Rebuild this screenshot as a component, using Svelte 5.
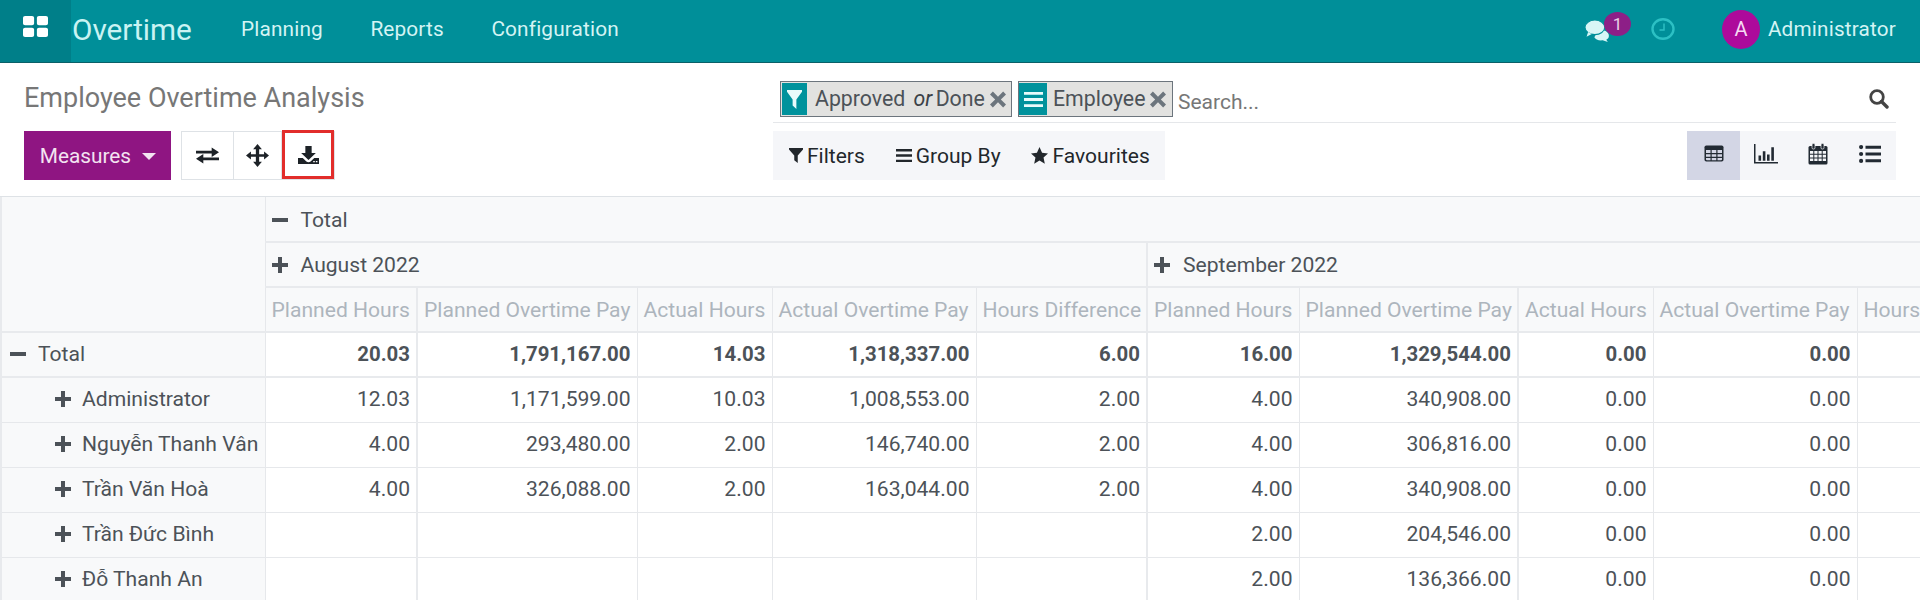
<script>
  const icons = {
    apps: 'M1.5 0h5A1.5 1.5 0 0 1 8 1.5v5A1.5 1.5 0 0 1 6.500 8h-5A1.500 1.500 0 0 1 0 6.500v-5A1.500 1.500 0 0 1 1.500 0zM11.500 0h5A1.500 1.500 0 0 1 18 1.500v5A1.500 1.500 0 0 1 16.500 8h-5A1.500 1.500 0 0 1 10 6.500v-5A1.500 1.500 0 0 1 11.500 0zM1.500 10h5A1.500 1.500 0 0 1 8 11.500v5A1.500 1.500 0 0 1 6.500 18h-5A1.500 1.500 0 0 1 0 16.500v-5A1.500 1.500 0 0 1 1.500 10zM11.500 10h5a1.500 1.500 0 0 1 1.500 1.500v5a1.500 1.500 0 0 1-1.500 1.500h-5a1.500 1.500 0 0 1-1.500-1.500v-5a1.500 1.500 0 0 1 1.500-1.500z',
    exchange: 'M0 4h15V0.500l7 5-7 5V7H0zM22 11H7V7.500l-7 5 7 5V14h15z',
    move: 'M10.500 0l4 4.500h-2.500v4.500h4.500V6.500l4.500 3.500-4.500 3.500v-2.500h-4.500v4.500h2.500l-4 4.500-4-4.500h2.500v-4.500H4.500v2.500L0 10l4.500-3.500v2.500h4.500V4.500H6.500z',
    download: 'M7 0h6v7h4l-7 7-7-7h4zM0 12h4.500l3.500 3.500c1 1 3 1 4 0l3.500-3.500H20v6H0zM14.500 15v1.200h1.500V15zM17 15v1.200h1.500V15z',
    filter: 'M0 0h16v1.500L10 8v8l-4-3V8L0 1.500z',
    bars: 'M0 1h16v2.600H0zM0 6.700h16v2.600H0zM0 12.400h16v2.600H0z',
    star: 'M8 0l2.400 5.300 5.600.7-4.200 3.900 1.200 5.800L8 12.800l-5 2.900 1.200-5.800L0 6l5.600-.7z',
    x: 'M2.500 0.500L7 5 11.500 0.500 14 3 9.500 7.500 14 12l-2.500 2.500L7 10l-4.500 4.500L0 12l4.500-4.500L0 3z',
    plus: 'M6 0h4v6h6v4h-6v6H6v-6H0V6h6z',
    minus: 'M0 6h16v4H0z',
    list: 'M0 2.100a2.100 2.100 0 1 1 4.200 0 2.100 2.100 0 1 1-4.200 0zM0 9a2.100 2.100 0 1 1 4.200 0 2.100 2.100 0 1 1-4.200 0zM0 15.900a2.100 2.100 0 1 1 4.200 0 2.100 2.100 0 1 1-4.200 0zM6.500 0.700H22v3H6.500zM6.500 7.500H22v3H6.500zM6.500 14.300H22v3H6.500z',
    chart: 'M0 0h1.500v17H24v1.500H0zM4.500 11h2.600v5H4.500zM8.800 7h2.600v9H8.800zM13 10h2.600v6H13zM17.300 3h2.600v13h-2.600z'
  };

  const measures = ['Planned Hours', 'Planned Overtime Pay', 'Actual Hours', 'Actual Overtime Pay', 'Hours Difference'];
  const widths = [264, 152, 220, 135, 204, 171, 152, 219, 135, 204, 150];
  const thick = [0, 4, 6];
  const rows = [
    { name: 'Total', top: true, cells: ['20.03', '1,791,167.00', '14.03', '1,318,337.00', '6.00', '16.00', '1,329,544.00', '0.00', '0.00', ''] },
    { name: 'Administrator', cells: ['12.03', '1,171,599.00', '10.03', '1,008,553.00', '2.00', '4.00', '340,908.00', '0.00', '0.00', ''] },
    { name: 'Nguyễn Thanh Vân', cells: ['4.00', '293,480.00', '2.00', '146,740.00', '2.00', '4.00', '306,816.00', '0.00', '0.00', ''] },
    { name: 'Trần Văn Hoà', cells: ['4.00', '326,088.00', '2.00', '163,044.00', '2.00', '4.00', '340,908.00', '0.00', '0.00', ''] },
    { name: 'Trần Đức Bình', cells: ['', '', '', '', '', '2.00', '204,546.00', '0.00', '0.00', ''] },
    { name: 'Đỗ Thanh An', cells: ['', '', '', '', '', '2.00', '136,366.00', '0.00', '0.00', ''] }
  ];
</script>

{#snippet icon(name, w, h, vw, vh, cls = '')}
  <svg class={cls} width={w} height={h} viewBox="0 0 {vw} {vh}" preserveAspectRatio="none" aria-hidden="true"><path d={icons[name]} fill="currentColor" /></svg>
{/snippet}

<div class="page">
  <header class="nav">
    <button class="apps" aria-label="Apps">{@render icon('apps', 25, 21, 18, 18)}</button>
    <span class="brand">Overtime</span>
    <nav class="menu">
      <span>Planning</span>
      <span>Reports</span>
      <span>Configuration</span>
    </nav>
    <div class="systray">
      <span class="chat">
        <svg width="27" height="22" viewBox="0 0 26 21" aria-hidden="true">
          <path d="M13 9c5 0 10 2 10 6 0 2-1 3-2.500 4l1.500 2-5-1.500c-4 .5-7-1-8-3z" fill="#d8f6f6" />
          <ellipse cx="9.500" cy="7" rx="9.500" ry="7" fill="#d8f6f6" stroke="#008f99" stroke-width="1" />
          <path d="M3 11.500L1.500 16l5-2.500z" fill="#d8f6f6" />
        </svg>
        <span class="badge">1</span>
      </span>
      <svg class="clock" width="24" height="22" viewBox="0 0 24 22" aria-hidden="true">
        <ellipse cx="12" cy="11" rx="10.500" ry="9.800" fill="none" stroke="#2cc0c4" stroke-width="2.400" />
        <path d="M13 5.500V12H8.500" fill="none" stroke="#2cc0c4" stroke-width="1.500" />
      </svg>
      <span class="avatar">A</span>
      <span class="user">Administrator</span>
    </div>
  </header>

  <section class="panel">
    <h1 class="title">Employee Overtime Analysis</h1>
    <div class="search">
      <span class="chip chip-a">
        <span class="chip-icon">{@render icon('filter', 15, 19, 16, 16)}</span>
        <span class="chip-text">Approved <em>or</em> Done</span>
        <span class="chip-x">{@render icon('x', 16, 17, 14, 15)}</span>
      </span>
      <span class="chip chip-b">
        <span class="chip-icon">{@render icon('bars', 19, 17, 16, 16)}</span>
        <span class="chip-text">Employee</span>
        <span class="chip-x">{@render icon('x', 16, 17, 14, 15)}</span>
      </span>
      <span class="placeholder">Search...</span>
      <svg class="loupe" width="20" height="20" viewBox="0 0 20 20" aria-hidden="true">
        <circle cx="8" cy="8" r="6.300" fill="none" stroke="currentColor" stroke-width="2.800" />
        <path d="M12.500 12.500L18 18" stroke="currentColor" stroke-width="3.400" stroke-linecap="round" />
      </svg>
    </div>

    <div class="actions">
      <button class="measures">Measures <span class="caret"></span></button>
      <div class="btn-group">
        <button class="tool">{@render icon('exchange', 23, 17, 22, 18)}</button>
        <button class="tool t2">{@render icon('move', 23, 23, 21, 20)}</button>
        <button class="tool hot">{@render icon('download', 21, 18, 20, 18)}</button>
      </div>
    </div>
    <div class="tools">
      <div class="filters">
        <span class="fitem f1">{@render icon('filter', 14, 15, 16, 16)}Filters</span>
        <span class="fitem f2">{@render icon('bars', 16, 15, 16, 16)}Group By</span>
        <span class="fitem f3">{@render icon('star', 17, 17, 16, 16)}Favourites</span>
      </div>
      <div class="views">
        <span class="view active">
          <svg width="20" height="17" viewBox="0 0 20 17" aria-hidden="true">
            <rect x="0.500" y="0.500" width="19" height="16" rx="1.800" fill="#222a33" />
            <path d="M2 5h4.500v3H2zM7.700 5h4.600v3H7.700zM13.500 5H18v3h-4.500zM2 9.200h4.500v2.600H2zM7.700 9.200h4.600v2.600H7.700zM13.500 9.200H18v2.600h-4.500zM2 13h4.500v2.200H3a1 1 0 0 1-1-1zM7.700 13h4.600v2.200H7.700zM13.500 13H18v1.200a1 1 0 0 1-1 1h-3.500z" fill="#d3d6e5" />
          </svg>
        </span>
        <span class="view">{@render icon('chart', 24, 20, 24, 19)}</span>
        <span class="view">
          <svg width="20" height="22" viewBox="0 0 20 22" aria-hidden="true">
            <rect x="0.500" y="3" width="19" height="18.500" rx="1.500" fill="#222a33" />
            <rect x="4" y="0.500" width="3" height="5.500" rx="1.200" fill="#222a33" stroke="#f5f6f9" stroke-width="0.700" />
            <rect x="13" y="0.500" width="3" height="5.500" rx="1.200" fill="#222a33" stroke="#f5f6f9" stroke-width="0.700" />
            <path d="M2 8h3.300v2.700H2zM6.300 8h3.200v2.700H6.300zM10.500 8h3.200v2.700h-3.200zM14.700 8H18v2.700h-3.300zM2 11.700h3.300v2.700H2zM6.300 11.700h3.200v2.700H6.300zM10.500 11.700h3.200v2.700h-3.200zM14.700 11.700H18v2.700h-3.300zM2 15.400h3.300V18H2zM6.300 15.400h3.200V18H6.300zM10.500 15.400h3.200V18h-3.200zM14.700 15.400H18V18h-3.300z" fill="#f5f6f9" />
          </svg>
        </span>
        <span class="view">{@render icon('list', 22, 18, 22, 18)}</span>
      </div>
    </div>
  </section>

  <div class="table-wrap">
    <table>
      <colgroup>
        {#each widths as w}<col style="width:{w}px" />{/each}
      </colgroup>
      <thead>
        <tr>
          <th class="corner" rowspan="3"></th>
          <th class="group" colspan="10">{@render icon('minus', 16, 16, 16, 16, 'tog')}Total</th>
        </tr>
        <tr>
          <th class="group thick" colspan="5">{@render icon('plus', 16, 16, 16, 16, 'tog')}August 2022</th>
          <th class="group" colspan="5">{@render icon('plus', 16, 16, 16, 16, 'tog')}September 2022</th>
        </tr>
        <tr>
          {#each [...measures, ...measures] as m, i}<th class="measure" class:thick={thick.includes(i)}>{m}</th>{/each}
        </tr>
      </thead>
      <tbody>
        {#each rows as r}
          <tr class:top={r.top}>
            <th class="label" class:child={!r.top}>{@render icon(r.top ? 'minus' : 'plus', 16, 16, 16, 16, 'tog')}{r.name}</th>
            {#each r.cells as c, i}<td class:thick={thick.includes(i)}>{c}</td>{/each}
          </tr>
        {/each}
      </tbody>
    </table>
  </div>
</div>

<style>
  :global(body) { margin: 0; overflow: hidden; background: #fff; }
  .page { width: 1920px; height: 600px; overflow: hidden; font-family: Roboto, "Liberation Sans", sans-serif; color: #4c5258; font-size: 21px; }
  button { font: inherit; border: 0; background: none; padding: 0; color: inherit; }

  .nav { display: flex; align-items: center; height: 63px; box-sizing: border-box; background: #008f99; border-bottom: 1px solid #0a6068; color: #d4f4f4; }
  .apps { width: 71px; height: 62px; display: flex; align-items: center; justify-content: center; background: #007f89; color: #fff; padding-bottom: 9px; }
  .brand { font-size: 29.700px; margin-left: 1px; width: 145px; color: #c9f3f3; margin-bottom: 4px; }
  .menu { display: flex; gap: 47.500px; font-size: 20.800px; letter-spacing: 0.150px; padding-left: 24px; margin-bottom: 4px; }
  .systray { margin-left: auto; display: flex; align-items: center; padding-right: 24px; margin-bottom: 4px; }
  .chat { position: relative; display: flex; width: 27px; margin-top: 4px; margin-right: 39px; }
  .badge { position: absolute; left: 19px; top: -8px; width: 27px; height: 24px; border-radius: 50%; background: #8d1f87; color: #e8d0e6; font-size: 17px; display: flex; align-items: center; justify-content: center; }
  .clock { margin-right: 47px; }
  .avatar { width: 38px; height: 39px; border-radius: 50%; background: #ad0a9b; color: #f6d9f2; display: flex; align-items: center; justify-content: center; font-size: 20px; margin-right: 8px; }
  .user { font-size: 20.700px; letter-spacing: 0.200px; }

  .panel { display: grid; grid-template-columns: 749px 1123px; grid-template-rows: 60px 49px; row-gap: 8px; padding: 0 24px 16px; border-bottom: 1px solid #dee2e6; }
  .title { margin: 0; font-weight: 400; font-size: 27px; line-height: 30px; color: #777; align-self: end; padding-bottom: 10px; }

  .search { display: flex; align-items: flex-end; box-sizing: border-box; border-bottom: 1px solid #e5e7ea; padding: 0 7px 5px; position: relative; }
  .chip { display: flex; align-items: stretch; height: 36px; box-sizing: border-box; border: 1px solid #6c757d; background: #e2e2e0; }
  .chip-a { width: 232px; }
  .chip-b { width: 155px; margin-left: 6px; }
  .chip-icon { display: flex; align-items: center; justify-content: center; background: #00929c; color: #e8fbfb; margin: 1px 0; }
  .chip-a .chip-icon { width: 25px; margin-left: 1px; }
  .chip-b .chip-icon { width: 28px; }
  .chip-text { font-size: 21.300px; line-height: 33px; color: #4c5258; margin-left: 8px; white-space: nowrap; }
  .chip-b .chip-text { margin-left: 6px; font-size: 21.300px; }
  .chip-text em { color: #3c4248; margin: 0 -2px 0 3px; }
  .chip-x { display: flex; align-items: center; margin-left: 5px; color: #6c757d; }
  .placeholder { margin-left: 5px; font-size: 21px; color: #777; line-height: 32px; margin-bottom: -1px; }
  .loupe { position: absolute; right: 7px; top: 26px; color: #444; }

  .actions { display: flex; align-items: stretch; }
  .measures { width: 147px; background: #8f1582; color: #f3e3f1; font-size: 20.800px; padding-left: 1px; }
  .caret { display: inline-block; width: 0; height: 0; border-left: 7px solid transparent; border-right: 7px solid transparent; border-top: 7.500px solid #f3e3f1; margin-left: 6px; vertical-align: 3px; }
  .btn-group { display: flex; margin-left: 10px; border: 1px solid #dee2e6; border-right-width: 1px; }
  .tool { width: 51px; display: flex; align-items: center; justify-content: center; color: #1d2227; border-right: 1px solid #dee2e6; box-sizing: content-box; }
  .t2 { width: 47px; }
  .tool.hot { width: 52px; margin-top: -2px; height: 49px; border: 3px solid #e22d2b; box-sizing: border-box; }

  .tools { display: flex; justify-content: space-between; }
  .filters { display: flex; align-items: center; width: 392px; box-sizing: border-box; background: #f5f6f9; padding-left: 16px; color: #22272c; font-size: 21px; }
  .fitem { display: flex; align-items: center; gap: 4px; white-space: nowrap; }
  .f2 { margin-left: 31px; }
  .f3 { margin-left: 30px; gap: 5px; }
  .views { display: flex; background: #f5f6f9; color: #222a33; }
  .view { width: 52px; display: flex; align-items: center; justify-content: center; padding-bottom: 4px; box-sizing: border-box; }
  .view.active { width: 53px; background: #d3d6e5; }

  .table-wrap { width: 1920px; overflow: hidden; }
  table { border-collapse: collapse; table-layout: fixed; width: 2006px; font-size: 21.100px; }
  th, td { height: 45px; box-sizing: border-box; padding: 0 6px; border: 1px solid #e6e8eb; white-space: nowrap; overflow: hidden; font-weight: 400; }
  thead tr:first-child th { border-top: 0; }
  thead th, .top td, .top .label { border-bottom-width: 2px; border-bottom-color: #e8eaed; }
  thead th, .label { background: #f8f9fa; text-align: left; }
  .corner { border-left: 2px solid #e8eaed; }
  .thick { border-right-width: 2px; border-right-color: #e8eaed; }
  .measure { color: #adb5bd; text-align: left; }
  td { text-align: right; background: #fff; color: #4c5258; }
  tbody td, tbody th { padding-bottom: 2px; }
  .top td { font-weight: 700; font-size: 20.400px; }
  .label { padding-left: 8px; border-left: 2px solid #e8eaed; }
  .child { padding-left: 53px; }
  :global(.tog) { color: #4c5258; margin-right: 13px; vertical-align: -1px; }
  .label :global(.tog) { margin-right: 12px; }
  .child :global(.tog) { margin-right: 11px; }
</style>
